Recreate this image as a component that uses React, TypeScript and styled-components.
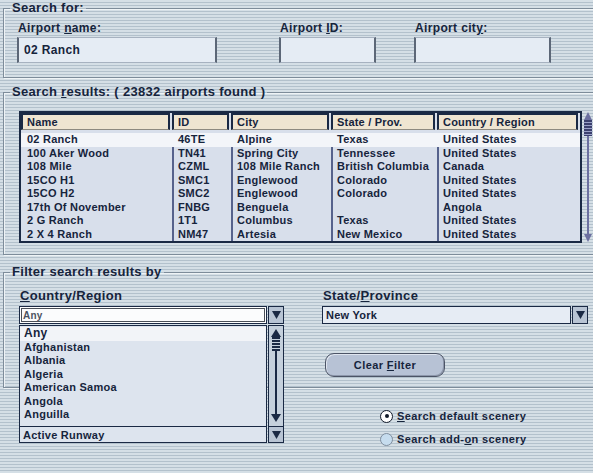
import React from "react";
import styled, { createGlobalStyle } from "styled-components";

const Global = createGlobalStyle`
  html, body { margin: 0; padding: 0; overflow: hidden; }
  body { font-family: "Liberation Sans", Arial, sans-serif; }
`;

const NAVY = "#16243c";

const Screen = styled.div`
  position: relative;
  width: 593px;
  height: 473px;
  overflow: hidden;
  box-sizing: border-box;
  padding-left: 3px;
  padding-top: 1px;
  background: repeating-linear-gradient(
    to bottom,
    #d5dfe6 0px,
    #d5dfe6 2px,
    #b3c1cc 2px,
    #b3c1cc 3px
  );
  color: ${NAVY};
  font-family: "Liberation Sans", Arial, sans-serif;
  font-weight: bold;
`;

const Group = styled.fieldset<{ $top: number; $pad: number; $rest: string }>`
  margin: ${(p) => p.$top}px 0 0 0;
  width: 640px;
  min-width: 0;
  box-sizing: border-box;
  border: 1px solid #7d8c9a;
  box-shadow: inset 1px 1px 0 #eef3f6, 1px 1px 0 #eef3f6;
  padding: ${(p) => p.$rest};
  padding-left: ${(p) => p.$pad}px;

  & > legend {
    margin-left: ${(p) => 6 - p.$pad}px;
  }
`;

const Legend = styled.legend`
  padding: 0 2px;
  font-size: 13px;
  line-height: 14px;
  letter-spacing: 0.3px;
  color: ${NAVY};
`;

const FieldRow = styled.div`
  display: flex;
  align-items: flex-start;
`;

const Field = styled.div<{ $w: number; $mr: number }>`
  display: flex;
  flex-direction: column;
  gap: 2px;
  width: ${(p) => p.$w}px;
  margin-right: ${(p) => p.$mr}px;
`;

const Label = styled.label<{ $size?: number }>`
  display: block;
  font-size: ${(p) => p.$size ?? 12}px;
  line-height: 14px;
  letter-spacing: 0.35px;
  padding-left: 1px;
`;

const TextBox = styled.div`
  height: 26px;
  box-sizing: border-box;
  background: #e5ecf4;
  border: 1px solid #a7b2c0;
  border-left: 2px solid #5c6777;
  border-right: 2px solid #5c6777;
  font-size: 12px;
  letter-spacing: 0.35px;
  line-height: 24px;
  padding-left: 5px;
`;

/* ---------- results table ---------- */

const TableWrap = styled.div`
  display: flex;
  gap: 1px;
  align-items: flex-start;
`;

const TableBox = styled.div`
  width: 563px;
  height: 132px;
  box-sizing: border-box;
  border: 2px solid #1a2944;
  background: #d8dfeb;
  overflow: hidden;
`;

const COLS = "151px 59px 100px 106px 1fr";

const HeadRow = styled.div`
  display: grid;
  grid-template-columns: ${COLS};
  height: 18px;
  background: #d8dfeb;
`;

const HeadCell = styled.div`
  margin: 0 2px 0 0;
  height: 17px;
  box-sizing: border-box;
  background: #efe5d1;
  border: 2px solid #1a2944;
  border-bottom: 1px solid #8e8a80;
  font-size: 11px;
  line-height: 14px;
  letter-spacing: 0.2px;
  padding-left: 4px;
  white-space: nowrap;
`;

const BodyRow = styled.div<{ $hi?: boolean }>`
  display: grid;
  grid-template-columns: ${COLS};
  height: 13.5px;
  background: ${(p) => (p.$hi ? "#f3f5f9" : "transparent")};
`;

const Cell = styled.div<{ $hi?: boolean; $first?: boolean }>`
  font-size: 11px;
  line-height: 13.5px;
  letter-spacing: 0.25px;
  white-space: nowrap;
  overflow: hidden;
  padding-left: ${(p) => (p.$first ? 6 : 4)}px;
  border-left: ${(p) =>
    p.$first ? "none" : `2px solid ${p.$hi ? "#f3f5f9" : "#56628c"}`};
`;

const TopGap = styled.div`
  height: 2px;
`;

const ScrollCol = styled.div`
  width: 10px;
  height: 136px;
  margin-top: -1px;
`;

/* ---------- filter area ---------- */

const FilterRow = styled.div`
  display: flex;
  gap: 38px;
  align-items: flex-start;
`;

const Column = styled.div<{ $w: number }>`
  width: ${(p) => p.$w}px;
  display: flex;
  flex-direction: column;
  gap: 3px;
`;

const ComboWrap = styled.div`
  position: relative;
`;

const Combo = styled.div<{ $h: number }>`
  display: flex;
  height: ${(p) => p.$h}px;
`;

const ComboField = styled.div<{ $focus?: boolean; $bg: string }>`
  flex: 1;
  box-sizing: border-box;
  background: ${(p) => p.$bg};
  border: 1px solid #1a2944;
  box-shadow: ${(p) =>
    p.$focus ? "inset 0 0 0 1px #ffffff, inset 0 0 0 2px #4a4f58" : "none"};
  font-size: 11px;
  letter-spacing: 0.25px;
  display: flex;
  align-items: center;
  padding-left: 3px;
`;

const FieldText = styled.span<{ $muted?: boolean }>`
  color: ${(p) => (p.$muted ? "#4b5261" : NAVY)};
  font-weight: bold;
  font-size: ${(p) => (p.$muted ? 10 : 11)}px;
`;

const DropBtn = styled.div`
  width: 16px;
  box-sizing: border-box;
  margin-left: 1px;
  background: #b8c4d4;
  border: 1px solid #1a2944;
  display: flex;
  align-items: center;
  justify-content: center;
`;

const Popup = styled.div`
  position: absolute;
  left: 0;
  top: 100%;
  width: 100%;
  display: flex;
  flex-direction: column;
  z-index: 2;
`;

const ListArea = styled.div`
  display: flex;
  height: 101px;
  margin-top: 1px;
`;

const List = styled.div`
  flex: 1;
  box-sizing: border-box;
  background: #dde4ee;
  border: 1px solid #1a2944;
  border-bottom: none;
  padding-top: 1px;
`;

const ListItem = styled.div<{ $hi?: boolean; $big?: boolean }>`
  height: 13.5px;
  line-height: 13.5px;
  padding-left: 4px;
  font-size: ${(p) => (p.$big ? 12 : 11)}px;
  letter-spacing: 0.25px;
  background: ${(p) => (p.$hi ? "#f2f4f8" : "transparent")};
  white-space: nowrap;
`;

const ListScroll = styled.div`
  width: 16px;
  margin-left: 1px;
  box-sizing: border-box;
  background: #c5d0dc;
  border: 1px solid #1a2944;
  border-bottom: none;
`;

const Button = styled.button`
  margin-top: 26px;
  margin-left: 3px;
  width: 120px;
  height: 24px;
  border-radius: 9px;
  border: 1px solid #4c5466;
  background: #b7c2d5;
  box-shadow: inset 1px 1px 0 #dfe5ef, inset -1px -1px 0 #8d97ab;
  color: ${NAVY};
  font-family: "Liberation Sans", Arial, sans-serif;
  font-weight: bold;
  font-size: 11px;
  letter-spacing: 0.4px;
  padding: 0;
  cursor: pointer;
`;

/* ---------- radios ---------- */

const RadioGroup = styled.div`
  margin: 20px 0 0 377px;
  display: flex;
  flex-direction: column;
  gap: 7px;
`;

const RadioRow = styled.div`
  display: flex;
  align-items: center;
  gap: 4px;
  height: 16px;
  font-size: 11px;
  letter-spacing: 0.4px;
`;

const RadioDot = styled.span<{ $on?: boolean }>`
  width: 13px;
  height: 13px;
  box-sizing: border-box;
  border-radius: 50%;
  border: ${(p) => (p.$on ? "1.5px solid #111a2a" : "1px solid #7e8d9e")};
  background: ${(p) => (p.$on ? "#ffffff" : "#c6dcee")};
  display: flex;
  align-items: center;
  justify-content: center;
  &::after {
    content: "";
    width: 4px;
    height: 4px;
    border-radius: 50%;
    background: #111a2a;
    display: ${(p) => (p.$on ? "block" : "none")};
  }
`;

/* ---------- drawings ---------- */

const DownArrow = () => (
  <svg width="9" height="8" viewBox="0 0 9 8">
    <polygon points="0,0 9,0 4.5,8" fill="#1a2944" />
  </svg>
);

const TableScrollbar = () => (
  <svg width="10" height="136" viewBox="0 0 10 136">
    <polygon points="5,2 9,10 1,10" fill="#6c70a0" />
    <rect x="1" y="10" width="8" height="16" fill="#3c416e" />
    {[12, 15, 18, 21, 24].map((y) => (
      <rect key={y} x="1" y={y} width="8" height="1" fill="#9aa0c8" />
    ))}
    <rect x="4" y="26" width="2" height="98" fill="#6c70a0" />
    <polygon points="1,124 9,124 5,132" fill="#6c70a0" />
  </svg>
);

const ListScrollbar = () => (
  <svg width="14" height="100" viewBox="0 0 14 100">
    <polygon points="7,3 12,11 2,11" fill="#1a2944" />
    <rect x="3" y="11" width="8" height="14" fill="#1a2944" />
    {[13, 16, 19, 22].map((y) => (
      <rect key={y} x="3" y={y} width="8" height="1" fill="#c5d0dc" />
    ))}
    <rect x="6" y="25" width="2" height="64" fill="#1a2944" />
    <polygon points="2,88 12,88 7,96" fill="#1a2944" />
  </svg>
);

/* ---------- data ---------- */

const rows = [
  ["02 Ranch", "46TE", "Alpine", "Texas", "United States"],
  ["100 Aker Wood", "TN41", "Spring City", "Tennessee", "United States"],
  ["108 Mile", "CZML", "108 Mile Ranch", "British Columbia", "Canada"],
  ["15CO H1", "SMC1", "Englewood", "Colorado", "United States"],
  ["15CO H2", "SMC2", "Englewood", "Colorado", "United States"],
  ["17th Of November", "FNBG", "Benguela", "", "Angola"],
  ["2 G Ranch", "1T1", "Columbus", "Texas", "United States"],
  ["2 X 4 Ranch", "NM47", "Artesia", "New Mexico", "United States"],
];

const headers = ["Name", "ID", "City", "State / Prov.", "Country / Region"];

const countries = [
  "Afghanistan",
  "Albania",
  "Algeria",
  "American Samoa",
  "Angola",
  "Anguilla",
];

export default function App() {
  return (
    <>
      <Global />
      <Screen>
        <Group $top={0} $pad={13} $rest="6px 0 14px">
          <Legend>Search for:</Legend>
          <FieldRow>
            <Field $w={200} $mr={62}>
              <Label>
                Airport <u>n</u>ame:
              </Label>
              <TextBox>02 Ranch</TextBox>
            </Field>
            <Field $w={97} $mr={38}>
              <Label>
                Airport <u>I</u>D:
              </Label>
              <TextBox />
            </Field>
            <Field $w={137} $mr={0}>
              <Label>
                Airport cit<u>y</u>:
              </Label>
              <TextBox />
            </Field>
          </FieldRow>
        </Group>

        <Group $top={7} $pad={15} $rest="12px 0 8px">
          <Legend>
            Search <u>r</u>esults: ( 23832 airports found )
          </Legend>
          <TableWrap>
            <TableBox>
              <HeadRow>
                {headers.map((h) => (
                  <HeadCell key={h}>{h}</HeadCell>
                ))}
              </HeadRow>
              <TopGap />
              {rows.map((r, i) => (
                <BodyRow key={i} $hi={i === 0}>
                  {r.map((c, j) => (
                    <Cell key={j} $first={j === 0} $hi={i === 0}>
                      {c}
                    </Cell>
                  ))}
                </BodyRow>
              ))}
            </TableBox>
            <ScrollCol>
              <TableScrollbar />
            </ScrollCol>
          </TableWrap>
        </Group>

        <Group $top={10} $pad={15} $rest="10px 0 10px">
          <Legend>Filter search results by</Legend>
          <FilterRow>
            <Column $w={265}>
              <Label $size={13}>
                <u>C</u>ountry/Region
              </Label>
              <ComboWrap>
                <Combo $h={18}>
                  <ComboField $focus $bg="#fbfcfd">
                    <FieldText $muted>Any</FieldText>
                  </ComboField>
                  <DropBtn>
                    <DownArrow />
                  </DropBtn>
                </Combo>
                <Popup>
                  <ListArea>
                    <List>
                      <ListItem $hi $big>
                        Any
                      </ListItem>
                      {countries.map((c) => (
                        <ListItem key={c}>{c}</ListItem>
                      ))}
                    </List>
                    <ListScroll>
                      <ListScrollbar />
                    </ListScroll>
                  </ListArea>
                  <Combo $h={17}>
                    <ComboField $bg="#dde4ee">
                      <FieldText>Active Runway</FieldText>
                    </ComboField>
                    <DropBtn>
                      <DownArrow />
                    </DropBtn>
                  </Combo>
                </Popup>
              </ComboWrap>
            </Column>
            <Column $w={266}>
              <Label $size={13}>
                State/<u>P</u>rovince
              </Label>
              <Combo $h={18}>
                <ComboField $bg="#e6ecf4">
                  <FieldText>New York</FieldText>
                </ComboField>
                <DropBtn>
                  <DownArrow />
                </DropBtn>
              </Combo>
              <Button>
                Clear <u>F</u>ilter
              </Button>
            </Column>
          </FilterRow>
        </Group>

        <RadioGroup>
          <RadioRow>
            <RadioDot $on />
            <span>
              <u>S</u>earch default scenery
            </span>
          </RadioRow>
          <RadioRow>
            <RadioDot />
            <span>
              Search add-<u>o</u>n scenery
            </span>
          </RadioRow>
        </RadioGroup>
      </Screen>
    </>
  );
}
